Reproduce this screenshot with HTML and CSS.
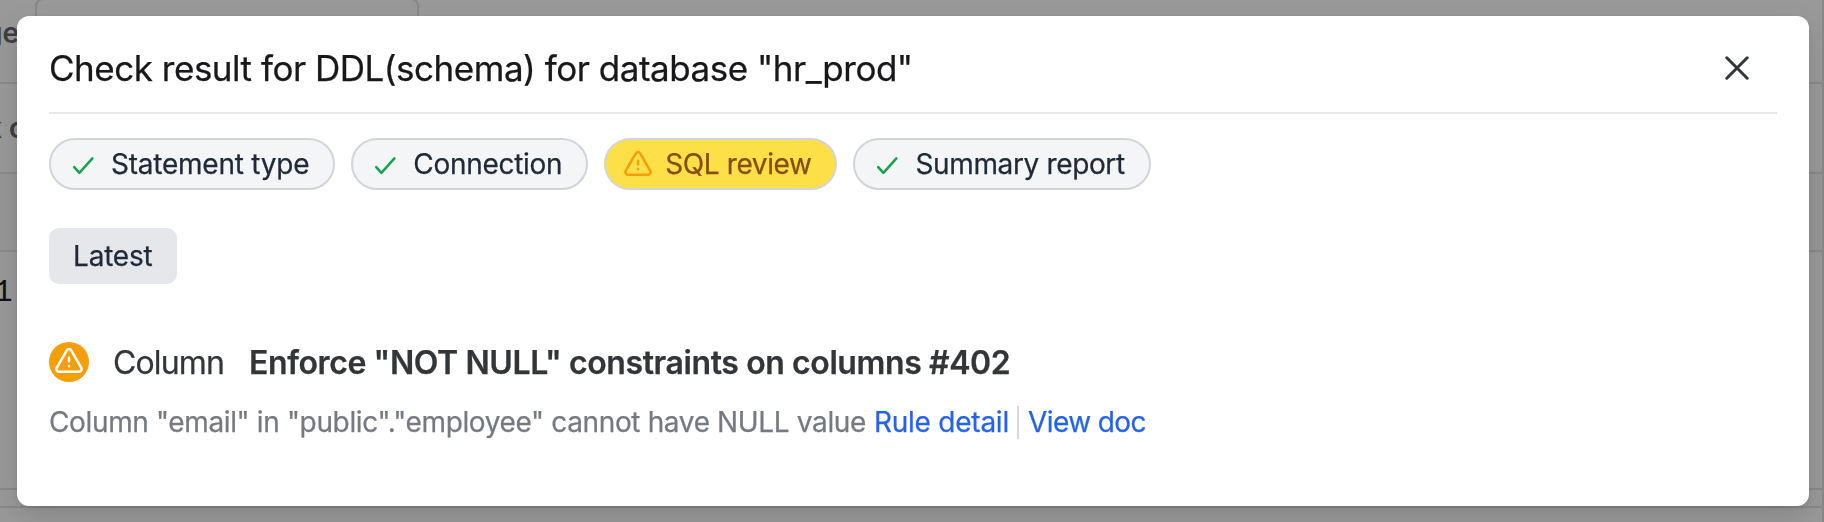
FILE: index.html
```html
<!DOCTYPE html>
<html lang="en">
<head>
<meta charset="utf-8">
<title>Check result</title>
<link rel="stylesheet" href="styles.css">
</head>
<body>
<div class="page">
  <div class="row row-stage"><span class="label label-stage">ge</span><div class="field"></div></div>
  <div class="row row-task"><span class="label label-task">k c</span></div>
  <div class="row row-head"></div>
  <div class="row row-line"><span class="line-no">1</span></div>
  <div class="row row-foot"></div>
</div>
<div class="overlay">
  <section class="modal">
    <header class="header">
      <h1 class="title">Check result for DDL(schema) for database "hr_prod"</h1>
      <svg class="close" viewBox="0 0 24 24"><path d="M1.8 1.8L22.2 22.2M22.2 1.8L1.8 22.2"/></svg>
    </header>
    <div class="chips">
      <div class="chip chip-statement"><svg class="check" viewBox="0 0 24 20"><path d="M2.2 11.2L7.4 16.8L20.4 2.4"/></svg><span>Statement type</span></div>
      <div class="chip"><svg class="check" viewBox="0 0 24 20"><path d="M2.2 11.2L7.4 16.8L20.4 2.4"/></svg><span>Connection</span></div>
      <div class="chip chip-warn"><svg class="warn" viewBox="0 0 28 28"><path d="M11.8 3.3L1.7 20.8A2.7 2.7 0 0 0 4 24.8H24A2.7 2.7 0 0 0 26.3 20.8L16.2 3.3A2.55 2.55 0 0 0 11.8 3.3ZM14 10.8V14.2M14 19V19.2"/></svg><span>SQL review</span></div>
      <div class="chip chip-summary"><svg class="check" viewBox="0 0 24 20"><path d="M2.2 11.2L7.4 16.8L20.4 2.4"/></svg><span>Summary report</span></div>
    </div>
    <div class="tabs"><div class="tab">Latest</div></div>
    <div class="result">
      <span class="badge"><svg class="badge-icon" viewBox="0 0 28 28"><path d="M11.8 3.3L1.7 20.8A2.7 2.7 0 0 0 4 24.8H24A2.7 2.7 0 0 0 26.3 20.8L16.2 3.3A2.55 2.55 0 0 0 11.8 3.3ZM14 10.8V14.2M14 19V19.2"/></svg></span>
      <span class="category">Column</span>
      <strong class="rule">Enforce "NOT NULL" constraints on columns #402</strong>
    </div>
    <div class="detail">
      <span class="message">Column "email" in "public"."employee" cannot have NULL value</span>
      <a class="link link-rule">Rule detail</a>
      <a class="link link-doc">View doc</a>
    </div>
  </section>
</div>
</body>
</html>
```
FILE: styles.css
```css
* { box-sizing: border-box; }
body { margin: 0; font-family: Inter, "Liberation Sans", sans-serif; background: #999; overflow: hidden; }
.page { width: 1824px; height: 522px; border-right: 2px solid #898989; overflow: hidden; color: #3d3e40; }
.row { display: flex; align-items: center; border-bottom: 2px solid #898989; white-space: nowrap; }
.row-stage { height: 84px; align-items: flex-start; }
.row-task { height: 90px; }
.row-head { height: 78px; background: #979797; }
.row-line { height: 238px; align-items: flex-start; }
.row-foot { height: 18px; }
.label { font-size: 28px; font-weight: 600; line-height: 36px; }
.label-stage { width: 36px; margin: 15px 0 0 -15px; }
.field { width: 384px; height: 66px; margin: -2px 0 0 14px; border: 2px solid #888; border-radius: 8px; }
.label-task { margin: -1px 0 0 -14px; }
.line-no { margin: 23px 0 0 -6px; font-family: "Liberation Mono", monospace; font-size: 31px; line-height: 36px; color: #111; }

.overlay { position: fixed; inset: 0; padding: 16px 15px 16px 17px; }
.modal { height: 490px; padding: 0 32px; background: #fff; border-radius: 12px; box-shadow: 0 12px 32px rgba(0,0,0,.12), 0 2px 6px rgba(0,0,0,.08); white-space: nowrap; -webkit-text-stroke: .25px currentColor; }
.header { display: flex; align-items: center; justify-content: space-between; height: 98px; padding: 8px 28px 0 0; border-bottom: 2px solid #e7e7e8; }
.title { margin: 0; font-size: 35px; font-weight: 400; line-height: 48px; letter-spacing: -.48px; color: #18181b; }
.close { width: 24px; height: 24px; fill: none; stroke: #333639; stroke-width: 3; stroke-linecap: round; }
.chips { display: flex; gap: 16px; margin-top: 24px; }
.chip { display: flex; align-items: center; height: 52px; padding: 0 24px 0 21px; border: 2px solid #d1d5d9; border-radius: 26px; background: #f3f5f7; color: #1f2937; font-size: 28px; line-height: 36px; letter-spacing: -.3px; }
.chip-statement { letter-spacing: -.23px; }
.chip-summary { letter-spacing: -.36px; }
.check { width: 24px; height: 20px; margin: 4px 15px 0 0; fill: none; stroke: #16a34a; stroke-width: 2.5; stroke-linecap: round; stroke-linejoin: round; }
.chip-warn { padding: 0 24px 0 18px; background: #fde047; color: #854d0e; letter-spacing: -.4px; }
.warn { width: 28px; height: 28px; margin-right: 13px; fill: none; stroke: #f59e0b; stroke-width: 2.5; stroke-linecap: round; stroke-linejoin: round; }
.tabs { display: flex; margin-top: 38px; }
.tab { height: 56px; padding: 0 24px; border-radius: 10px; background: #e5e7eb; color: #1f2937; font-size: 28px; line-height: 56px; letter-spacing: -.2px; }
.result { display: flex; align-items: center; height: 40px; margin-top: 58px; font-size: 32px; color: #333639; }
.badge { display: flex; align-items: center; justify-content: center; width: 40px; height: 40px; border-radius: 50%; background: #f59e0b; }
.badge-icon { width: 28px; height: 28px; margin-bottom: 3px; fill: none; stroke: #fff; stroke-width: 2.5; stroke-linecap: round; stroke-linejoin: round; }
.category { margin-left: 24px; letter-spacing: -.85px; }
.rule { margin-left: 25px; font-weight: 600; letter-spacing: -.4px; }
.detail { display: flex; align-items: center; height: 34px; margin-top: 23px; font-size: 28px; letter-spacing: -.36px; color: #767a80; }
.link { color: #2563eb; }
.link-rule { margin-left: 8px; letter-spacing: -.24px; }
.link-doc { margin-left: 8px; padding-left: 9px; border-left: 2px solid #d9dadd; line-height: 33px; letter-spacing: -.58px; }
```
